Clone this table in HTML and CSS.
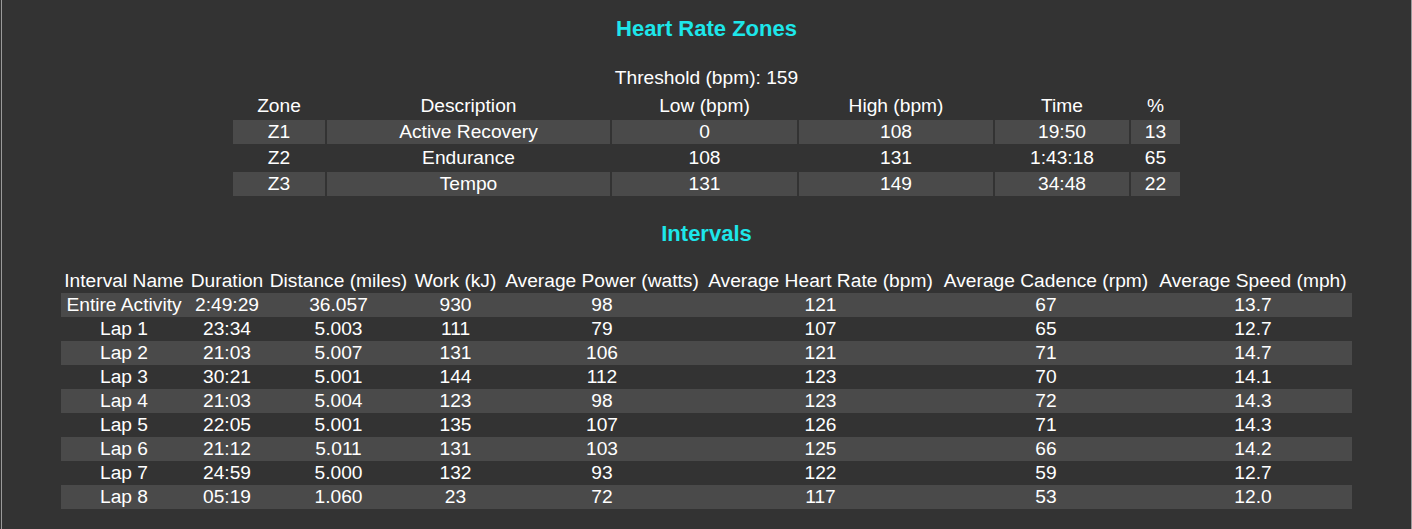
FILE: index.html
```html
<!DOCTYPE html>
<html lang="en">
<head>
<meta charset="utf-8">
<title>Heart Rate Zones</title>
<link rel="stylesheet" href="styles.css">
</head>
<body>
<div class="panel">
  <h3 class="title title-zones">Heart Rate Zones</h3>
  <p class="threshold">Threshold (bpm): 159</p>
  <table class="zones">
    <colgroup>
      <col class="z-zone"><col class="z-desc"><col class="z-low"><col class="z-high"><col class="z-time"><col class="z-pct">
    </colgroup>
    <thead>
      <tr><th>Zone</th><th>Description</th><th>Low (bpm)</th><th>High (bpm)</th><th>Time</th><th>%</th></tr>
    </thead>
    <tbody>
      <tr class="band"><td>Z1</td><td>Active Recovery</td><td>0</td><td>108</td><td>19:50</td><td>13</td></tr>
      <tr><td>Z2</td><td>Endurance</td><td>108</td><td>131</td><td>1:43:18</td><td>65</td></tr>
      <tr class="band"><td>Z3</td><td>Tempo</td><td>131</td><td>149</td><td>34:48</td><td>22</td></tr>
    </tbody>
  </table>

  <h3 class="title title-intervals">Intervals</h3>
  <table class="intervals">
    <colgroup>
      <col class="i-name"><col class="i-dur"><col class="i-dist"><col class="i-work"><col class="i-pow"><col class="i-hr"><col class="i-cad"><col class="i-spd">
    </colgroup>
    <thead>
      <tr><th>Interval Name</th><th>Duration</th><th>Distance (miles)</th><th>Work (kJ)</th><th>Average Power (watts)</th><th>Average Heart Rate (bpm)</th><th>Average Cadence (rpm)</th><th>Average Speed (mph)</th></tr>
    </thead>
    <tbody>
      <tr class="band"><td>Entire Activity</td><td>2:49:29</td><td>36.057</td><td>930</td><td>98</td><td>121</td><td>67</td><td>13.7</td></tr>
      <tr><td>Lap 1</td><td>23:34</td><td>5.003</td><td>111</td><td>79</td><td>107</td><td>65</td><td>12.7</td></tr>
      <tr class="band"><td>Lap 2</td><td>21:03</td><td>5.007</td><td>131</td><td>106</td><td>121</td><td>71</td><td>14.7</td></tr>
      <tr><td>Lap 3</td><td>30:21</td><td>5.001</td><td>144</td><td>112</td><td>123</td><td>70</td><td>14.1</td></tr>
      <tr class="band"><td>Lap 4</td><td>21:03</td><td>5.004</td><td>123</td><td>98</td><td>123</td><td>72</td><td>14.3</td></tr>
      <tr><td>Lap 5</td><td>22:05</td><td>5.001</td><td>135</td><td>107</td><td>126</td><td>71</td><td>14.3</td></tr>
      <tr class="band"><td>Lap 6</td><td>21:12</td><td>5.011</td><td>131</td><td>103</td><td>125</td><td>66</td><td>14.2</td></tr>
      <tr><td>Lap 7</td><td>24:59</td><td>5.000</td><td>132</td><td>93</td><td>122</td><td>59</td><td>12.7</td></tr>
      <tr class="band"><td>Lap 8</td><td>05:19</td><td>1.060</td><td>23</td><td>72</td><td>117</td><td>53</td><td>12.0</td></tr>
    </tbody>
  </table>
</div>
</body>
</html>
```
FILE: styles.css
```css
html, body {
  margin: 0;
  padding: 0;
  background: #333333;
}

body {
  font-family: "Liberation Sans", Arial, sans-serif;
  font-size: 19.2px;
  color: #ffffff;
}

.panel {
  margin-left: 1px;
  border-left: 1px solid #9a9a9a;
  border-right: 1px solid #9a9a9a;
  height: 529px;
  box-sizing: border-box;
  padding-top: 16px;
  overflow: hidden;
}

.title {
  margin: 0;
  text-align: center;
  font-size: 22px;
  line-height: 25px;
  font-weight: bold;
  color: #1de6ea;
}

.threshold {
  margin: 26px 0 0;
  text-align: center;
  line-height: 22px;
}

table {
  margin-left: auto;
  margin-right: auto;
  table-layout: fixed;
}

th, td {
  padding: 1px 0;
  line-height: 22px;
  text-align: center;
  font-weight: normal;
  white-space: nowrap;
}

.band td {
  background: #4a4a4a;
}

/* Zones table */
.zones {
  margin-top: 3px;
  border-spacing: 2px;
  width: 951px;
}

.z-zone { width: 92px; }
.z-desc { width: 283px; }
.z-low { width: 185px; }
.z-high { width: 194px; }
.z-time { width: 134px; }
.z-pct { width: 49px; }

.title-intervals {
  margin-top: 23px;
}

/* Intervals table */
.intervals {
  margin-top: 23px;
  border-spacing: 0;
  width: 1291px;
}

.i-name { width: 126px; }
.i-dur { width: 80px; }
.i-dist { width: 143px; }
.i-work { width: 91px; }
.i-pow { width: 202px; }
.i-hr { width: 235px; }
.i-cad { width: 216px; }
.i-spd { width: 198px; }
```
